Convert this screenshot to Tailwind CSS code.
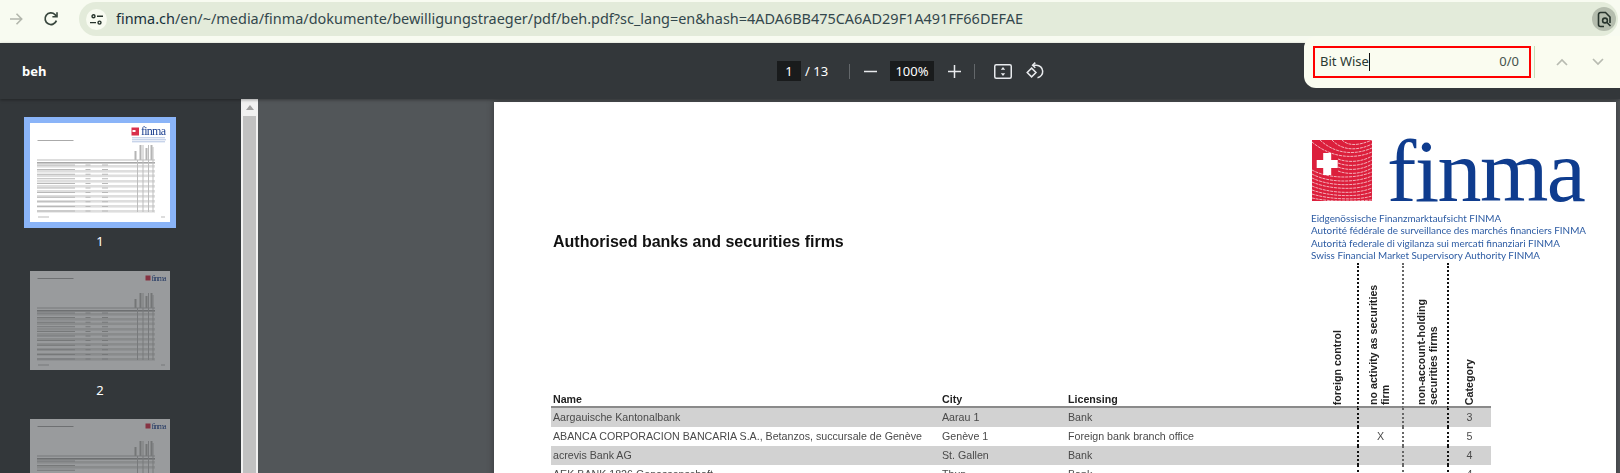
<!doctype html>
<html lang="en">
<head>
<meta charset="utf-8">
<title>beh.pdf</title>
<script src="https://cdn.jsdelivr.net/npm/@tailwindcss/browser@4"></script>
</head>
<body class="bg-[#33373a]">
<div class="relative w-[1620px] h-[473px] overflow-hidden flex flex-col font-['Noto_Sans',sans-serif]">

  <!-- browser bar -->
  <div class="h-[43px] shrink-0 bg-[#f8fbf1] flex items-start">
    <div class="w-[79px] h-[38px] shrink-0 flex items-center">
      <svg class="ml-[9px] w-[14px] h-[14px]" viewBox="0 0 14 14" fill="none" stroke="#b3b7ad" stroke-width="1.6"><path d="M1 7h11.5M7.5 1.8 12.7 7l-5.2 5.2"/></svg>
      <svg class="ml-[20px] w-[16px] h-[16px]" viewBox="0 0 16 16" fill="none" stroke="#38463d" stroke-width="1.7"><path d="M13.4 9.6A5.8 5.8 0 1 1 12 3.6l1.6 1.8"/><path d="M14 1.2v4.6H9.4" stroke-width="1.6"/></svg>
    </div>
    <div class="mt-[2px] w-[1539px] h-[34px] rounded-full bg-[#e3ebda] flex items-center">
      <div class="ml-[7px] w-[21px] h-[21px] rounded-full bg-[#f8fbf1] flex items-center justify-center shrink-0">
        <svg class="w-[13px] h-[11px]" viewBox="0 0 13 11" fill="none" stroke="#26332b" stroke-width="1.4"><circle cx="3.5" cy="2.2" r="1.5"/><path d="M7 2.2h6M0 8.6h6"/><circle cx="9.5" cy="8.6" r="1.5"/></svg>
      </div>
      <span class="ml-[9px] text-[14.45px] leading-[20px] whitespace-nowrap text-[#17303a]">finma.ch<span class="text-[#33474c]">/en/~/media/finma/dokumente/bewilligungstraeger/pdf/beh.pdf?sc_lang=en&amp;hash=4ADA6BB475CA6AD29F1A491FF66DEFAE</span></span>
      <div class="ml-auto mr-[2px] w-[24px] h-[24px] rounded-full bg-[#b5bdae] flex items-center justify-center">
        <svg class="w-[15px] h-[17px]" viewBox="0 0 15 17" fill="none" stroke="#26332b" stroke-width="1.6"><path d="M7 15.5H3.5a2 2 0 0 1-2-2v-10a2 2 0 0 1 2-2h5l4.500 4.500v6"/><circle cx="8" cy="9.500" r="2.400"/><path d="m10 11.500 3.500 3.500"/></svg>
      </div>
    </div>
  </div>

  <!-- pdf toolbar -->
  <div class="relative z-10 h-[56px] shrink-0 bg-[#33373a] shadow-[0_1px_3px_rgba(0,0,0,0.35)] flex items-center text-white font-['Noto_Sans',sans-serif]">
    <span class="ml-[22px] w-[755px] text-[13px] font-bold mt-[2px] shrink-0">beh</span>
    <span class="w-[24px] h-[20px] bg-[#191b1c] text-[13px] leading-[20px] text-center shrink-0">1</span>
    <span class="ml-[4px] w-[44px] text-[13px] leading-[20px] shrink-0">/ 13</span>
    <span class="w-px h-[15px] bg-[#63676a] shrink-0"></span>
    <svg class="ml-[14px] w-[13px] h-[13px] shrink-0" viewBox="0 0 13 13" fill="none" stroke="#e8eaed" stroke-width="1.500"><path d="M0 6.500h13"/></svg>
    <span class="ml-[13px] w-[44px] h-[20px] bg-[#191b1c] text-[13px] leading-[20px] text-center shrink-0">100%</span>
    <svg class="ml-[14px] w-[13px] h-[13px] shrink-0" viewBox="0 0 13 13" fill="none" stroke="#e8eaed" stroke-width="1.500"><path d="M0 6.500h13M6.500 0v13"/></svg>
    <span class="ml-[13px] w-px h-[15px] bg-[#63676a] shrink-0"></span>
    <svg class="ml-[19px] w-[18px] h-[15px] shrink-0" viewBox="0 0 18 15" fill="none"><rect x=".75" y=".75" width="16.500" height="13.500" rx="1.500" stroke="#e8eaed" stroke-width="1.500"/><path d="m9 3 2.200 2.800H6.800zM9 12l2.200-2.800H6.800z" fill="#e8eaed"/></svg>
    <svg class="ml-[14px] w-[18px] h-[18px] shrink-0" viewBox="0 0 18 18" fill="none" stroke="#e8eaed" stroke-width="1.500"><path d="M7 3.200h3.500a6.300 6.300 0 0 1 1 12.500"/><path d="M9.300.6 6.600 3.200l2.700 2.600"/><path d="m5.600 6.100 4.400 4.400-4.400 4.400-4.400-4.400z"/></svg>
  </div>

  <!-- viewer -->
  <div class="flex flex-1 min-h-0">
    <!-- thumbnails -->
    <div class="w-[241px] shrink-0 bg-[#33373a] flex flex-col items-start pl-[24px] pt-[18px] text-white text-[13px] leading-[18px]">
      <div class="w-[152px] h-[111px] bg-[#8ab4f8] p-[6px] shrink-0">
        <svg class="block w-[140px] h-[99px] bg-white" viewBox="0 0 140 99">
          <g class="blur-[0.7px]">
            <rect x="101.500" y="4.500" width="7.500" height="8" fill="#d9304c"/>
            <rect x="102.500" y="7" width="3" height="2" fill="#fff"/>
            <text x="111" y="12" font-family="Liberation Serif" font-size="12" fill="#1b3f8f" textLength="25">finma</text>
            <rect x="102" y="14" width="33" height="1.400" fill="#c8d4ea"/>
            <rect x="102" y="16" width="34" height="1.400" fill="#c8d4ea"/>
            <rect x="102" y="18" width="33" height="1.400" fill="#c8d4ea"/>
            <rect x="7.500" y="17" width="36" height="1" fill="#aaa"/>
            <path d="M105.500 28v9M110.500 22v15M116.500 25v12M121.500 22v15" stroke="#b5b5b5" stroke-width="2"/>
            <rect x="7" y="36.500" width="118" height="1" fill="#bbb"/><rect x="7" y="39" width="118" height="1.600" fill="#a8a8a8"/>
            <rect x="7" y="42" width="118" height="2.600" fill="#dedede"/>
            <rect x="7" y="47" width="118" height="2.600" fill="#dedede"/>
            <rect x="7" y="51.500" width="118" height="2.600" fill="#dedede"/>
            <rect x="7" y="57" width="118" height="2.600" fill="#dedede"/>
            <rect x="7" y="62" width="118" height="2.600" fill="#dedede"/>
            <rect x="7" y="67" width="118" height="2.600" fill="#dedede"/>
            <rect x="7" y="72" width="118" height="2.600" fill="#dedede"/>
            <rect x="7" y="77" width="118" height="2.600" fill="#dedede"/>
            <rect x="7" y="82" width="118" height="2.600" fill="#dedede"/>
            <rect x="7" y="87" width="118" height="2.600" fill="#dedede"/>
            <path d="M26 41.500v48" stroke="#b8b8b8" stroke-width="38" stroke-dasharray="1 3.600"/>
            <path d="M58 41.500v48" stroke="#b8b8b8" stroke-width="5" stroke-dasharray="1 3.600"/>
            <path d="M75 41.500v48" stroke="#b8b8b8" stroke-width="6" stroke-dasharray="1 3.600"/>
            <path d="M107.500 37v52M113 22v67M118.500 22v67M123 24v65" stroke="#bdbdbd"/>
            <rect x="8" y="93.500" width="11" height="1" fill="#bbb"/><rect x="131" y="93.500" width="4" height="1" fill="#bbb"/>
          </g>
        </svg>
      </div>
      <span class="w-[152px] text-center mt-[4px] h-[18px]">1</span>
      <div class="mt-[21px] ml-[6px] w-[140px] h-[99px] shrink-0 bg-white opacity-50">
        <svg class="block w-[140px] h-[99px]" viewBox="0 0 140 99">
          <g class="blur-[0.7px]">
            <rect x="115.500" y="4.500" width="5" height="5" fill="#d9304c"/>
            <text x="121.500" y="9.500" font-family="Liberation Serif" font-size="8" fill="#1b3f8f" textLength="15">finma</text>
            <rect x="7.500" y="7" width="36" height="1" fill="#aaa"/>
            <path d="M105.500 28v9M110.500 22v15M116.500 25v12M121.500 22v15" stroke="#b5b5b5" stroke-width="2"/>
            <rect x="7" y="36.500" width="118" height="1" fill="#bbb"/><rect x="7" y="39" width="118" height="1.600" fill="#a8a8a8"/>
            <rect x="7" y="42" width="118" height="2.600" fill="#dedede"/>
            <rect x="7" y="47" width="118" height="2.600" fill="#dedede"/>
            <rect x="7" y="51.500" width="118" height="2.600" fill="#dedede"/>
            <rect x="7" y="57" width="118" height="2.600" fill="#dedede"/>
            <rect x="7" y="62" width="118" height="2.600" fill="#dedede"/>
            <rect x="7" y="67" width="118" height="2.600" fill="#dedede"/>
            <rect x="7" y="72" width="118" height="2.600" fill="#dedede"/>
            <rect x="7" y="77" width="118" height="2.600" fill="#dedede"/>
            <rect x="7" y="82" width="118" height="2.600" fill="#dedede"/>
            <rect x="7" y="87" width="118" height="2.600" fill="#dedede"/>
            <path d="M26 41.500v48" stroke="#b8b8b8" stroke-width="38" stroke-dasharray="1 3.600"/>
            <path d="M58 41.500v48" stroke="#b8b8b8" stroke-width="5" stroke-dasharray="1 3.600"/>
            <path d="M75 41.500v48" stroke="#b8b8b8" stroke-width="6" stroke-dasharray="1 3.600"/>
            <path d="M107.500 37v52M113 22v67M118.500 22v67M123 24v65" stroke="#bdbdbd"/>
            <rect x="8" y="93.500" width="11" height="1" fill="#bbb"/><rect x="131" y="93.500" width="4" height="1" fill="#bbb"/>
          </g>
        </svg>
      </div>
      <span class="w-[152px] text-center mt-[11px] h-[18px]">2</span>
      <div class="mt-[20px] ml-[6px] w-[140px] h-[99px] shrink-0 bg-white opacity-50">
        <svg class="block w-[140px] h-[99px]" viewBox="0 0 140 99">
          <g class="blur-[0.7px]">
            <rect x="115.500" y="4.500" width="5" height="5" fill="#d9304c"/>
            <text x="121.500" y="9.500" font-family="Liberation Serif" font-size="8" fill="#1b3f8f" textLength="15">finma</text>
            <rect x="7.500" y="7" width="36" height="1" fill="#aaa"/>
            <path d="M105.500 28v9M110.500 22v15M116.500 25v12M121.500 22v15" stroke="#b5b5b5" stroke-width="2"/>
            <rect x="7" y="36.500" width="118" height="1" fill="#bbb"/><rect x="7" y="39" width="118" height="1.600" fill="#a8a8a8"/>
            <rect x="7" y="42" width="118" height="2.600" fill="#dedede"/>
            <rect x="7" y="47" width="118" height="2.600" fill="#dedede"/>
            <path d="M26 41.500v12" stroke="#b8b8b8" stroke-width="38" stroke-dasharray="1 3.600"/>
            <path d="M107.500 37v17M113 22v32M118.500 22v32M123 24v30" stroke="#bdbdbd"/>
          </g>
        </svg>
      </div>
    </div>

    <!-- thumbnail scrollbar -->
    <div class="w-[17px] shrink-0 bg-[#f1f1f1] flex flex-col items-center">
      <div class="h-[17px] flex items-center justify-center shrink-0">
        <svg class="w-[8px] h-[5px]" viewBox="0 0 8 5"><path d="M4 0l4 5H0z" fill="#a0a0a0"/></svg>
      </div>
      <div class="w-[13px] flex-1 bg-[#c1c1c1]"></div>
    </div>

    <!-- page area -->
    <div class="flex-1 min-w-0 bg-[#525659] pl-[236px] pr-0 pt-[3px]">
      <div class="relative w-[1122px] h-[400px] bg-white shadow-[0_0_7px_rgba(0,0,0,0.35)] pl-[57px] font-['Liberation_Sans',sans-serif] overflow-hidden">
        <!-- masthead -->
        <div class="h-[161px] flex">
          <h1 class="w-[761px] shrink-0 pt-[130px] pl-[2px] text-[16px] leading-[20px] font-bold text-[#111] blur-[0.2px]">Authorised banks and securities firms</h1>
          <div class="pt-[38px] blur-[0.3px]">
            <div class="flex items-start">
              <svg class="block w-[60px] h-[61px] shrink-0" viewBox="0 0 60 61">
                <rect width="60" height="61" fill="#dc1f3c"/>
                <g fill="none" stroke="#fff" stroke-width=".9" stroke-dasharray="3 .8" stroke-opacity=".72">
                  <path d="M30 0C36 6 46 6 60 0"/>
                  <path d="M20 0C30 11 46 11 60 4"/>
                  <path d="M8 0C24 15 44 15 60 8"/>
                  <path d="M0 2C20 19 44 19 60 12"/>
                  <path d="M26 19C36 23 50 22 60 16"/>
                  <path d="M26 23C36 27 50 26 60 20"/>
                  <path d="M26 27C36 31 50 30 60 24"/>
                  <path d="M26 31C36 35 50 34 60 28"/>
                  <path d="M0 30C16 39 44 39 60 32"/>
                  <path d="M0 34C16 43 44 43 60 36"/>
                  <path d="M0 38C16 46 44 47 60 40"/>
                  <path d="M0 42C16 49 44 51 60 44"/>
                  <path d="M0 46C16 53 44 55 60 48"/>
                  <path d="M0 50C16 56 44 58 60 52"/>
                  <path d="M0 54C16 59 44 61 60 56"/>
                  <path d="M0 58C14 61 30 62 60 60"/>
                </g>
                <path d="M4.700 20H11.200V13H19.200V20H25.700V28H19.200V35H11.200V28H4.700z" fill="#fff"/>
              </svg>
              <div class="ml-[15px] -mt-[18px] h-[61px] font-['Liberation_Serif',serif] text-[88px] leading-[100px] tracking-[-1.600px] text-[#0f3c8e]">finma</div>
            </div>
            <div class="mt-[11px] w-[280px] -ml-[1px] font-['Lato',sans-serif] text-[9.9px] leading-[12.300px] whitespace-nowrap text-[#2c5ba3]">
              <p>Eidgenössische Finanzmarktaufsicht FINMA</p>
              <p>Autorité fédérale de surveillance des marchés financiers FINMA</p>
              <p>Autorità federale di vigilanza sui mercati finanziari FINMA</p>
              <p>Swiss Financial Market Supervisory Authority FINMA</p>
            </div>
          </div>
        </div>

        <!-- table -->
        <div class="w-[940px] grid grid-cols-[389px_126px_291px_45px_45px_44px] text-[10.67px] leading-[19px] text-[#4a4a4a] blur-[0.3px]">
          <div class="h-[145px] flex items-end pl-[2px] font-bold leading-[13px] text-[#222] border-b-2 border-[#8a8a8a]">Name</div>
          <div class="h-[145px] flex items-end font-bold leading-[13px] pl-[2px] text-[#222] border-b-2 border-[#8a8a8a]">City</div>
          <div class="h-[145px] flex items-end justify-between pl-[2px] font-bold leading-[13px] text-[#222] border-b-2 border-[#8a8a8a]">
            <span>Licensing</span>
            <span class="[writing-mode:vertical-rl] rotate-180 leading-[12px] mr-[14px] pt-[1px]">foreign control</span>
          </div>
          <div class="h-[145px] flex items-end pl-[8px] font-bold text-[#222] border-b-2 border-b-[#8a8a8a] border-l-2 border-l-[#111] border-dotted [border-bottom-style:solid]">
            <span class="[writing-mode:vertical-rl] rotate-180 leading-[12px] pt-[1px]">no activity as securities firm</span>
          </div>
          <div class="h-[145px] flex items-end pl-[11px] font-bold text-[#222] border-b-2 border-b-[#8a8a8a] border-l-2 border-l-[#666] border-dotted [border-bottom-style:solid]">
            <span class="[writing-mode:vertical-rl] rotate-180 leading-[12px] pt-[1px]">non-account-holding securities firms</span>
          </div>
          <div class="h-[145px] flex items-end pl-[14px] font-bold text-[#222] border-b-2 border-b-[#8a8a8a] border-l-2 border-l-[#111] border-dotted [border-bottom-style:solid]">
            <span class="[writing-mode:vertical-rl] rotate-180 leading-[12px] pt-[1px]">Category</span>
          </div>

          <div class="h-[19px] bg-[#d2d2d2] pl-[2px]">Aargauische Kantonalbank</div>
          <div class="h-[19px] bg-[#d2d2d2] pl-[2px]">Aarau 1</div>
          <div class="h-[19px] bg-[#d2d2d2] pl-[2px]">Bank</div>
          <div class="h-[19px] bg-[#d2d2d2] border-l-2 border-dotted border-[#111]"></div>
          <div class="h-[19px] bg-[#d2d2d2] border-l-2 border-dotted border-[#666]"></div>
          <div class="h-[19px] bg-[#d2d2d2] border-l-2 border-dotted border-[#111] text-center pr-[1px]">3</div>

          <div class="h-[19px] pl-[2px] whitespace-nowrap">ABANCA CORPORACION BANCARIA S.A., Betanzos, succursale de Genève</div>
          <div class="h-[19px] pl-[2px]">Genève 1</div>
          <div class="h-[19px] pl-[2px]">Foreign bank branch office</div>
          <div class="h-[19px] border-l-2 border-dotted border-[#111] text-center">X</div>
          <div class="h-[19px] border-l-2 border-dotted border-[#666]"></div>
          <div class="h-[19px] border-l-2 border-dotted border-[#111] text-center pr-[1px]">5</div>

          <div class="h-[19px] bg-[#d2d2d2] pl-[2px]">acrevis Bank AG</div>
          <div class="h-[19px] bg-[#d2d2d2] pl-[2px]">St. Gallen</div>
          <div class="h-[19px] bg-[#d2d2d2] pl-[2px]">Bank</div>
          <div class="h-[19px] bg-[#d2d2d2] border-l-2 border-dotted border-[#111]"></div>
          <div class="h-[19px] bg-[#d2d2d2] border-l-2 border-dotted border-[#666]"></div>
          <div class="h-[19px] bg-[#d2d2d2] border-l-2 border-dotted border-[#111] text-center pr-[1px]">4</div>

          <div class="h-[19px] pl-[2px] whitespace-nowrap">AEK BANK 1826 Genossenschaft</div>
          <div class="h-[19px] pl-[2px]">Thun</div>
          <div class="h-[19px] pl-[2px]">Bank</div>
          <div class="h-[19px] border-l-2 border-dotted border-[#111]"></div>
          <div class="h-[19px] border-l-2 border-dotted border-[#666]"></div>
          <div class="h-[19px] border-l-2 border-dotted border-[#111] text-center pr-[1px]">4</div>
        </div>
      </div>
    </div>
  </div>

  <!-- find bar overlay -->
  <div class="absolute left-[1304px] top-[36px] w-[316px] h-[52px] z-20 bg-[#fafcf0] rounded-l-[12px] flex items-center">
    <div class="ml-[9px] w-[218px] h-[32px] border-2 border-[#f00] flex items-center pl-[5px] pr-[10px] text-[13px] text-[#2a3a33]">
      <span>Bit Wise</span><span class="w-px h-[18px] bg-[#111]"></span>
      <span class="ml-auto text-[#45534c]">0/0</span>
    </div>
    <span class="ml-[3px] w-px h-[32px] bg-[#c4e0b6]"></span>
    <svg class="ml-[21px] w-[12px] h-[8px]" viewBox="0 0 12 8" fill="none" stroke="#b8bbb1" stroke-width="1.700"><path d="M1 7l5-5 5 5"/></svg>
    <svg class="ml-[24px] w-[12px] h-[8px]" viewBox="0 0 12 8" fill="none" stroke="#b8bbb1" stroke-width="1.700"><path d="M1 1l5 5 5-5"/></svg>
  </div>
</div>
</body>
</html>
